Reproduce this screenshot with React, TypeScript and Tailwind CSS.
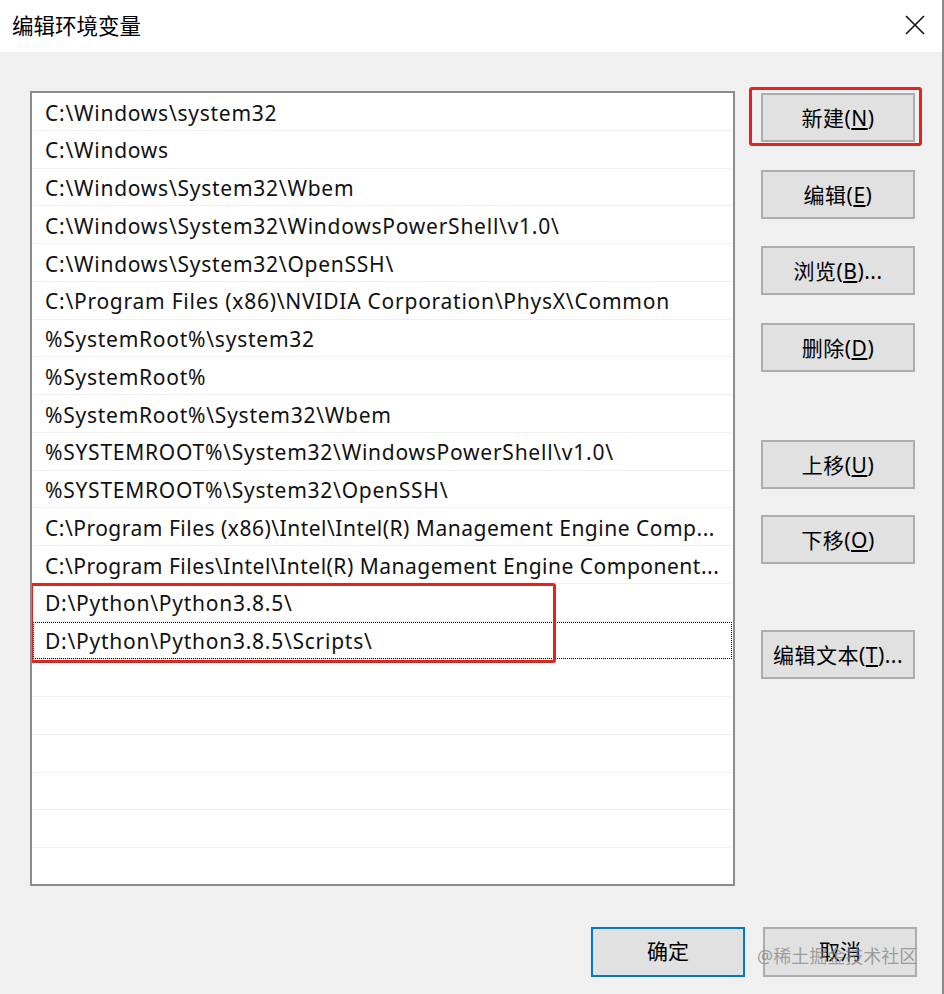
import React from 'react';

const paths = [
  'C:\\Windows\\system32',
  'C:\\Windows',
  'C:\\Windows\\System32\\Wbem',
  'C:\\Windows\\System32\\WindowsPowerShell\\v1.0\\',
  'C:\\Windows\\System32\\OpenSSH\\',
  'C:\\Program Files (x86)\\NVIDIA Corporation\\PhysX\\Common',
  '%SystemRoot%\\system32',
  '%SystemRoot%',
  '%SystemRoot%\\System32\\Wbem',
  '%SYSTEMROOT%\\System32\\WindowsPowerShell\\v1.0\\',
  '%SYSTEMROOT%\\System32\\OpenSSH\\',
  'C:\\Program Files (x86)\\Intel\\Intel(R) Management Engine Comp...',
  'C:\\Program Files\\Intel\\Intel(R) Management Engine Component...',
  'D:\\Python\\Python3.8.5\\',
  'D:\\Python\\Python3.8.5\\Scripts\\',
  '', '', '', '', '', '',
];

const font = { fontFamily: '"Noto Sans", "Noto Sans CJK SC", sans-serif' };

function Btn({ label, hot, tail = '', className = '' }: { label: string; hot: string; tail?: string; className?: string }) {
  return (
    <button
      className={`w-[154px] h-[49px] bg-[#e1e1e1] border-2 border-[#adadad] text-[21px] tracking-[0.5px] text-black flex items-center justify-center pt-[2px] ${className}`}
    >
      {label}(<span className="underline underline-offset-2">{hot}</span>){tail}
    </button>
  );
}

export default function App() {
  return (
    <div className="w-[944px] h-[994px] bg-[#f0f0f0] border-r-2 border-[#8a8a8a] flex flex-col relative" style={font}>
      {/* Title bar */}
      <div className="h-[52px] bg-white flex items-center justify-between pl-[12px] pr-[16px]">
        <span className="text-[21.5px] text-black">编辑环境变量</span>
        <svg width="22" height="22" viewBox="0 0 22 22" className="mt-[-3px]">
          <path d="M2 2 L20 20 M20 2 L2 20" stroke="#111" strokeWidth="1.6" />
        </svg>
      </div>

      <div className="flex pt-[39px] pl-[30px]">
        {/* Path list */}
        <div className="relative w-[705px] h-[795px] bg-white border-2 border-[#8c8c8c] overflow-hidden">
          {paths.map((p, i) => (
            <div
              key={i}
              className={`h-[37.75px] mx-[1px] flex items-center pl-[12px] pr-[2px] pt-[4px] border-b border-[#f0f0f0] text-[21px] text-[#111] whitespace-nowrap overflow-hidden ${
                i === 11 || i === 12 ? 'tracking-[0.5px]' : 'tracking-[0.75px]'
              } ${i === 14 ? 'outline-1 outline-dotted outline-black -outline-offset-1' : ''}`}
            >
              <span className="truncate">{p}</span>
            </div>
          ))}
          <div className="absolute left-[-2px] top-[490px] w-[526px] h-[80px] border-[3px] border-[#e3231f] rounded-[3px]" />
        </div>

        {/* Action buttons */}
        <div className="flex flex-col ml-[26px] pt-[2px]">
          <div className="relative">
            <Btn label="新建" hot="N" />
            <div className="absolute left-[-12px] top-[-6px] w-[173px] h-[59px] border-[3px] border-[#e3231f] rounded-[3px]" />
          </div>
          <Btn label="编辑" hot="E" className="mt-[28px]" />
          <Btn label="浏览" hot="B" tail="..." className="mt-[27px]" />
          <Btn label="删除" hot="D" className="mt-[28px]" />
          <Btn label="上移" hot="U" className="mt-[68px]" />
          <Btn label="下移" hot="O" className="mt-[26px]" />
          <Btn label="编辑文本" hot="T" tail="..." className="mt-[66px]" />
        </div>
      </div>

      {/* Bottom buttons */}
      <div className="flex justify-end gap-[18px] pr-[25px] mt-[41px]">
        <button className="w-[154px] h-[50px] bg-[#e1e1e1] border-2 border-[#0078d7] text-[21px] text-black">确定</button>
        <button className="w-[154px] h-[50px] bg-[#e1e1e1] border-2 border-[#adadad] text-[21px] text-black">取消</button>
      </div>

      {/* Watermark */}
      <span className="absolute left-[757px] top-[943px] text-[18px] text-[#8a8a8a]/80 whitespace-nowrap">@稀土掘金技术社区</span>
    </div>
  );
}
